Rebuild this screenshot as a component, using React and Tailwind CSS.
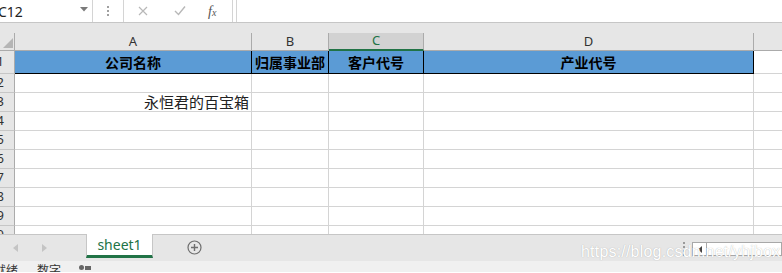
import React from "react";

const FONT = { fontFamily: '"Noto Sans", "Noto Sans CJK SC", sans-serif' };
const CJK = { fontFamily: '"Noto Sans CJK SC", "Noto Sans", sans-serif' };

function RowHeader({ n, h }) {
  return (
    <div
      className={`w-[15px] shrink-0 ${h} bg-[#e6e6e6] border-r border-b border-r-[#ababab] border-b-[#c6c6c6] overflow-hidden flex items-center justify-end pr-[10px] text-[13px] text-[#333] whitespace-nowrap`}
    >
      {n}
    </div>
  );
}

function Row({ n, children }) {
  return (
    <div className="flex h-[19px]">
      <RowHeader n={n} h="h-[19px]" />
      {children}
    </div>
  );
}

function EmptyCells() {
  return (
    <>
      <div className="w-[237px] shrink-0 border-r border-b border-[#d4d4d4]" />
      <div className="w-[77px] shrink-0 border-r border-b border-[#d4d4d4]" />
      <div className="w-[95px] shrink-0 border-r border-b border-[#d4d4d4]" />
      <div className="w-[330px] shrink-0 border-r border-b border-[#d4d4d4]" />
      <div className="flex-1 border-b border-[#d4d4d4]" />
    </>
  );
}

export default function App() {
  return (
    <div className="w-[782px] h-[273px] overflow-hidden bg-white relative select-none" style={FONT}>
      {/* Formula bar */}
      <div className="h-[23px] flex bg-white border-b border-[#c6c6c6]">
        <div className="w-[93px] shrink-0 border-r border-[#d4d4d4] relative flex items-center">
          <span className="text-[14px] text-[#222] -ml-[2px]">C12</span>
          <svg className="absolute left-[80px] top-[7px]" width="8" height="5" viewBox="0 0 8 5">
            <path d="M0 0 L8 0 L4 4.5 Z" fill="#7a7a7a" />
          </svg>
        </div>
        <div className="w-[30px] shrink-0 flex flex-col items-center justify-center gap-[2px]">
          <div className="w-[2px] h-[2px] bg-[#a0a0a0]" />
          <div className="w-[2px] h-[2px] bg-[#a0a0a0]" />
          <div className="w-[2px] h-[2px] bg-[#a0a0a0]" />
        </div>
        <div className="w-[110px] shrink-0 border-l border-r border-[#d4d4d4] relative">
          <svg className="absolute left-[14px] top-[6px]" width="10" height="10" viewBox="0 0 10 10">
            <path d="M1 1 L9 9 M9 1 L1 9" stroke="#b8b8b8" strokeWidth="1.2" />
          </svg>
          <svg className="absolute left-[50px] top-[5px]" width="12" height="11" viewBox="0 0 12 11">
            <path d="M1 6 L4.5 9.5 L11 1.5" stroke="#b8b8b8" strokeWidth="1.4" fill="none" />
          </svg>
          <span
            className="absolute left-[84px] top-[1px] text-[14px] italic text-[#555]"
            style={{ fontFamily: '"Liberation Serif", serif' }}
          >
            f<span className="text-[10px]">x</span>
          </span>
        </div>
        <div className="w-[3px] shrink-0" />
        <div className="flex-1 border-l border-[#d4d4d4]" />
      </div>

      {/* Grid area */}
      <div className="h-[212px] overflow-hidden bg-[#e6e6e6]">
        <div className="h-[10px]" />
        {/* Column headers */}
        <div className="flex h-[18px] border-b border-[#ababab] text-[13px] text-[#333]">
          <div className="w-[15px] shrink-0 border-r border-[#ababab] relative">
            <svg className="absolute left-[3px] top-[5px]" width="10" height="10" viewBox="0 0 10 10">
              <path d="M10 0 L10 10 L0 10 Z" fill="#b5b5b5" />
            </svg>
          </div>
          <div className="w-[237px] shrink-0 border-r border-[#ababab] flex items-center justify-center">A</div>
          <div className="w-[77px] shrink-0 border-r border-[#ababab] flex items-center justify-center">B</div>
          <div className="w-[95px] shrink-0 border-r border-[#ababab] bg-[#d2d2d2] border-b-2 border-b-[#217346] flex items-center justify-center text-[#217346] -mb-[1px]">
            C
          </div>
          <div className="w-[330px] shrink-0 border-r border-[#ababab] flex items-center justify-center">D</div>
          <div className="flex-1" />
        </div>

        <div className="bg-white">
          {/* Row 1 */}
          <div className="flex h-[23px]">
            <RowHeader n="1" h="h-[23px]" />
            <div className="w-[237px] shrink-0 bg-[#5b9bd5] border-r border-b border-black flex items-center justify-center text-[14px] font-bold text-black" style={CJK}>
              公司名称
            </div>
            <div className="w-[77px] shrink-0 bg-[#5b9bd5] border-r border-b border-black flex items-center justify-center text-[14px] font-bold text-black whitespace-nowrap" style={CJK}>
              归属事业部
            </div>
            <div className="w-[95px] shrink-0 bg-[#5b9bd5] border-r border-b border-black flex items-center justify-center text-[14px] font-bold text-black" style={CJK}>
              客户代号
            </div>
            <div className="w-[330px] shrink-0 bg-[#5b9bd5] border-r border-b border-black flex items-center justify-center text-[14px] font-bold text-black" style={CJK}>
              产业代号
            </div>
            <div className="flex-1 border-b border-[#d4d4d4]" />
          </div>
          <Row n="2">
            <EmptyCells />
          </Row>
          <Row n="3">
            <div className="w-[237px] shrink-0 border-r border-b border-[#d4d4d4] flex items-center justify-end pr-[2px] text-[15px] text-[#222]" style={CJK}>
              永恒君的百宝箱
            </div>
            <div className="w-[77px] shrink-0 border-r border-b border-[#d4d4d4]" />
            <div className="w-[95px] shrink-0 border-r border-b border-[#d4d4d4]" />
            <div className="w-[330px] shrink-0 border-r border-b border-[#d4d4d4]" />
            <div className="flex-1 border-b border-[#d4d4d4]" />
          </Row>
          {["4", "5", "6", "7", "8", "9", "10"].map((n) => (
            <Row key={n} n={n}>
              <EmptyCells />
            </Row>
          ))}
        </div>
      </div>

      {/* Sheet tab bar */}
      <div className="h-[27px] bg-[#e6e6e6] border-t border-[#c6c6c6] flex relative -mt-[1px]">
        <div className="w-[86px] shrink-0 relative">
          <svg className="absolute left-[13px] top-[9px]" width="5" height="8" viewBox="0 0 5 8">
            <path d="M5 0 L0 4 L5 8 Z" fill="#c4c4c4" />
          </svg>
          <svg className="absolute left-[42px] top-[9px]" width="5" height="8" viewBox="0 0 5 8">
            <path d="M0 0 L5 4 L0 8 Z" fill="#c4c4c4" />
          </svg>
        </div>
        <div className="w-[67px] h-[24px] -mt-[1px] shrink-0 bg-white border-l border-r border-[#c6c6c6] border-b-[3px] border-b-[#217346] flex items-center justify-center text-[14px] text-[#217346]">
          sheet1
        </div>
        <div className="w-[84px] shrink-0 relative">
          <svg className="absolute left-[34px] top-[5px]" width="15" height="15" viewBox="0 0 15 15">
            <circle cx="7.5" cy="7.5" r="6.5" stroke="#6e6e6e" strokeWidth="1.2" fill="none" />
            <path d="M7.5 4 V11 M4 7.5 H11" stroke="#6e6e6e" strokeWidth="1.4" />
          </svg>
        </div>
        <div className="flex-1" />
        <div className="w-[16px] shrink-0 flex flex-col items-center justify-center gap-[2px] pt-[2px]">
          <div className="w-[2px] h-[2px] bg-[#9a9a9a]" />
          <div className="w-[2px] h-[2px] bg-[#9a9a9a]" />
          <div className="w-[2px] h-[2px] bg-[#9a9a9a]" />
          <div className="w-[2px] h-[2px] bg-[#9a9a9a]" />
        </div>
        <div className="w-[90px] shrink-0 pt-[7px]">
          <div className="h-[14px] bg-white border border-[#a8a8a8] flex">
            <div className="w-[14px] h-full border-r border-[#a8a8a8] flex items-center justify-center">
              <svg width="4" height="7" viewBox="0 0 4 7">
                <path d="M4 0 L0 3.5 L4 7 Z" fill="#444" />
              </svg>
            </div>
          </div>
        </div>
        <div
          className="absolute left-[581px] top-[5px] text-[16px] text-white whitespace-nowrap tracking-[0.2px]"
          style={{ fontFamily: '"Liberation Sans", Arial, sans-serif', textShadow: "0 0 1px rgba(120,120,120,0.6)" }}
        >
          https://blog.csdn.net/yhjbox
        </div>
      </div>

      {/* Status bar */}
      <div className="h-[11px] bg-[#f0f0f0] flex items-start text-[12px] text-[#333] overflow-hidden" style={CJK}>
        <span className="-ml-[6px] mt-[1px] leading-[16px]">就绪</span>
        <span className="ml-[19px] mt-[1px] leading-[16px]">数字</span>
        <span className="ml-[18px] mt-[4px] flex items-center gap-[1px]">
          <span className="w-[5px] h-[5px] rounded-full bg-[#666]" />
          <span className="w-[6px] h-[4px] bg-[#666]" />
        </span>
      </div>
    </div>
  );
}
